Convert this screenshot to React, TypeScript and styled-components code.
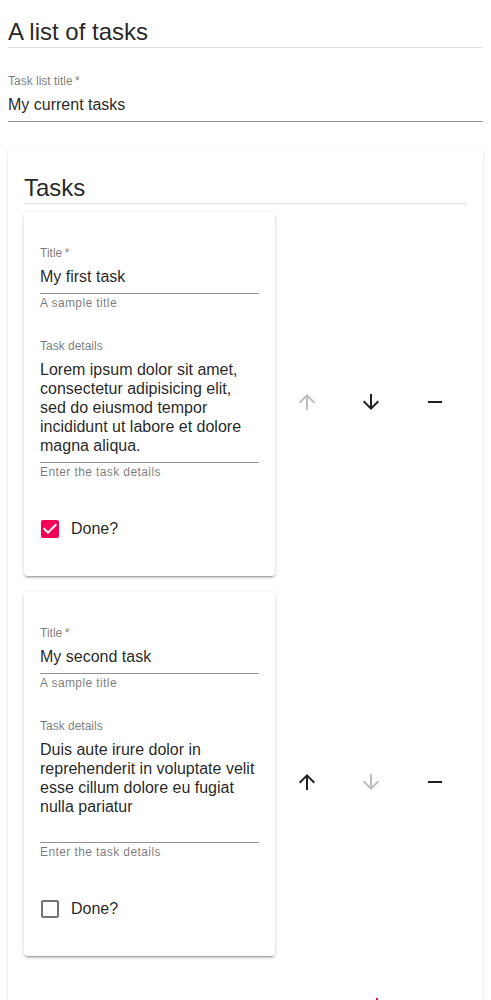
import React from 'react';
import styled, { createGlobalStyle } from 'styled-components';

const TEXT_PRIMARY = 'rgba(0, 0, 0, 0.87)';
const TEXT_SECONDARY = 'rgba(0, 0, 0, 0.54)';
const TEXT_DISABLED = 'rgba(0, 0, 0, 0.26)';
const DIVIDER = 'rgba(0, 0, 0, 0.12)';
const UNDERLINE = 'rgba(0, 0, 0, 0.42)';
const SECONDARY = '#f50057';

const GlobalStyle = createGlobalStyle`
  body {
    margin: 0;
    background: #fff;
    color: ${TEXT_PRIMARY};
    font-family: "Liberation Sans", Arial, sans-serif;
  }
`;

const StyledPage = styled.div`
  padding: 16px 8px 24px;
`;

const StyledHeading = styled.h5`
  color: ${TEXT_PRIMARY};
  font-size: 24px;
  font-weight: 400;
  line-height: 31px;
  margin: 0;
`;

const StyledDivider = styled.hr`
  background: ${DIVIDER};
  border: none;
  height: 1px;
  margin: 0;
`;

const StyledField = styled.div<{ $top: number }>`
  display: flex;
  flex-direction: column;
  margin-top: ${({ $top }) => $top}px;
`;

const StyledLabel = styled.label`
  color: ${TEXT_SECONDARY};
  font-size: 12px;
  line-height: 16px;
`;

const StyledInput = styled.input`
  background: transparent;
  border: none;
  border-bottom: 1px solid ${UNDERLINE};
  color: ${TEXT_PRIMARY};
  font-family: inherit;
  font-size: 16px;
  line-height: 19px;
  margin: 0;
  outline: none;
  padding: 6px 0 7px;
  width: 100%;
`;

const StyledTextArea = styled.textarea`
  background: transparent;
  border: none;
  border-bottom: 1px solid ${UNDERLINE};
  box-sizing: content-box;
  color: ${TEXT_PRIMARY};
  display: block;
  font-family: inherit;
  font-size: 16px;
  height: 95px;
  line-height: 19px;
  margin: 0;
  outline: none;
  overflow: hidden;
  padding: 6px 0 7px;
  resize: none;
  width: 100%;
`;

const StyledHelper = styled.p`
  color: ${TEXT_SECONDARY};
  font-size: 12px;
  letter-spacing: 0.4px;
  line-height: 12px;
  margin: 3px 0 0;
`;

const StyledPaper = styled.section`
  background: #fff;
  border-radius: 4px;
  box-shadow: 0 2px 1px -1px rgba(0, 0, 0, 0.2), 0 1px 1px 0 rgba(0, 0, 0, 0.14),
    0 1px 3px 0 rgba(0, 0, 0, 0.12);
  margin-top: 26px;
  padding: 24px 16px 16px;
`;

const StyledTaskList = styled.ul`
  display: flex;
  flex-direction: column;
  gap: 16px;
  list-style: none;
  margin: 8px 0 0;
  padding: 0;
`;

const StyledTaskRow = styled.li`
  display: flex;
`;

const StyledTaskCard = styled.div`
  background: #fff;
  border-radius: 4px;
  box-shadow: 0 3px 1px -2px rgba(0, 0, 0, 0.2), 0 2px 2px 0 rgba(0, 0, 0, 0.14),
    0 1px 5px 0 rgba(0, 0, 0, 0.12);
  box-sizing: border-box;
  flex: 0 0 251px;
  padding: 16px 16px 26px;
`;

const StyledActions = styled.div`
  align-self: center;
  display: grid;
  flex: 1;
  grid-template-columns: repeat(3, 1fr);
  justify-items: center;
  padding-top: 16px;
`;

const StyledIconButton = styled.button<{ $disabled?: boolean }>`
  align-items: center;
  background: transparent;
  border: none;
  border-radius: 50%;
  color: ${({ $disabled }) => ($disabled ? TEXT_DISABLED : TEXT_PRIMARY)};
  cursor: ${({ $disabled }) => ($disabled ? 'default' : 'pointer')};
  display: flex;
  height: 48px;
  justify-content: center;
  padding: 12px;
  width: 48px;
`;

const StyledCheckRow = styled.label`
  align-items: center;
  cursor: pointer;
  display: flex;
  margin: 30px 0 0 -11px;
`;

const StyledCheckBox = styled.span<{ $checked: boolean }>`
  color: ${({ $checked }) => ($checked ? SECONDARY : TEXT_SECONDARY)};
  display: flex;
  padding: 9px;
`;

const StyledCheckText = styled.span`
  color: ${TEXT_PRIMARY};
  font-size: 16px;
  line-height: 24px;
`;

const StyledAddRow = styled.div`
  display: flex;
  justify-content: flex-end;
  margin-top: 31px;
`;

const StyledAddButton = styled.button`
  align-items: center;
  background: transparent;
  border: none;
  border-radius: 4px;
  color: ${SECONDARY};
  display: flex;
  font-family: inherit;
  font-size: 13px;
  font-weight: 500;
  line-height: 24px;
  padding: 6px 16px;
  text-transform: uppercase;
`;

const Icon: React.FC<{ d: string }> = ({ d }) => (
  <svg width="24" height="24" viewBox="0 0 24 24" fill="currentColor">
    <path d={d} />
  </svg>
);

const ARROW_UP = 'M4 12l1.41 1.41L11 7.83V20h2V7.83l5.58 5.59L20 12l-8-8-8 8z';
const ARROW_DOWN = 'M20 12l-1.41-1.41L13 16.17V4h-2v12.17l-5.58-5.59L4 12l8 8 8-8z';
const REMOVE = 'M19 13H5v-2h14v2z';
const ADD = 'M19 13h-6v6h-2v-6H5v-2h6V5h2v6h6v2z';
const CHECKED =
  'M19 3H5c-1.11 0-2 .9-2 2v14c0 1.1.89 2 2 2h14c1.11 0 2-.9 2-2V5c0-1.1-.89-2-2-2zm-9 14l-5-5 1.41-1.41L10 14.17l7.59-7.59L19 8l-9 9z';
const UNCHECKED =
  'M19 5v14H5V5h14m0-2H5c-1.1 0-2 .9-2 2v14c0 1.1.9 2 2 2h14c1.1 0 2-.9 2-2V5c0-1.1-.9-2-2-2z';

interface Task {
  title: string;
  details: string;
  done: boolean;
}

const TASKS: Task[] = [
  {
    title: 'My first task',
    details:
      'Lorem ipsum dolor sit amet, consectetur adipisicing elit, sed do eiusmod tempor incididunt ut labore et dolore magna aliqua.',
    done: true,
  },
  {
    title: 'My second task',
    details:
      'Duis aute irure dolor in reprehenderit in voluptate velit esse cillum dolore eu fugiat nulla pariatur',
    done: false,
  },
];

const TaskItem: React.FC<{ task: Task; index: number; count: number }> = ({
  task,
  index,
  count,
}) => {
  const [done, setDone] = React.useState(task.done);

  return (
    <StyledTaskRow>
      <StyledTaskCard>
        <StyledField $top={17}>
          <StyledLabel>Title{'\u2009'}*</StyledLabel>
          <StyledInput defaultValue={task.title} />
          <StyledHelper>A sample title</StyledHelper>
        </StyledField>
        <StyledField $top={29}>
          <StyledLabel>Task details</StyledLabel>
          <StyledTextArea rows={5} defaultValue={task.details} />
          <StyledHelper>Enter the task details</StyledHelper>
        </StyledField>
        <StyledCheckRow onClick={() => setDone(!done)}>
          <StyledCheckBox $checked={done}>
            <Icon d={done ? CHECKED : UNCHECKED} />
          </StyledCheckBox>
          <StyledCheckText>Done?</StyledCheckText>
        </StyledCheckRow>
      </StyledTaskCard>
      <StyledActions>
        <StyledIconButton $disabled={index === 0} aria-label="Move up">
          <Icon d={ARROW_UP} />
        </StyledIconButton>
        <StyledIconButton $disabled={index === count - 1} aria-label="Move down">
          <Icon d={ARROW_DOWN} />
        </StyledIconButton>
        <StyledIconButton aria-label="Remove">
          <Icon d={REMOVE} />
        </StyledIconButton>
      </StyledActions>
    </StyledTaskRow>
  );
};

const App: React.FC = () => {
  return (
    <StyledPage>
      <GlobalStyle />
      <StyledHeading>A list of tasks</StyledHeading>
      <StyledDivider />
      <StyledField $top={25}>
        <StyledLabel>Task list title{'\u2009'}*</StyledLabel>
        <StyledInput defaultValue="My current tasks" />
      </StyledField>
      <StyledPaper>
        <StyledHeading>Tasks</StyledHeading>
        <StyledDivider />
        <StyledTaskList>
          {TASKS.map((task, index) => (
            <TaskItem key={task.title} task={task} index={index} count={TASKS.length} />
          ))}
        </StyledTaskList>
        <StyledAddRow>
          <StyledAddButton>
            <Icon d={ADD} />
            Add Item
          </StyledAddButton>
        </StyledAddRow>
      </StyledPaper>
    </StyledPage>
  );
};

export default App;
